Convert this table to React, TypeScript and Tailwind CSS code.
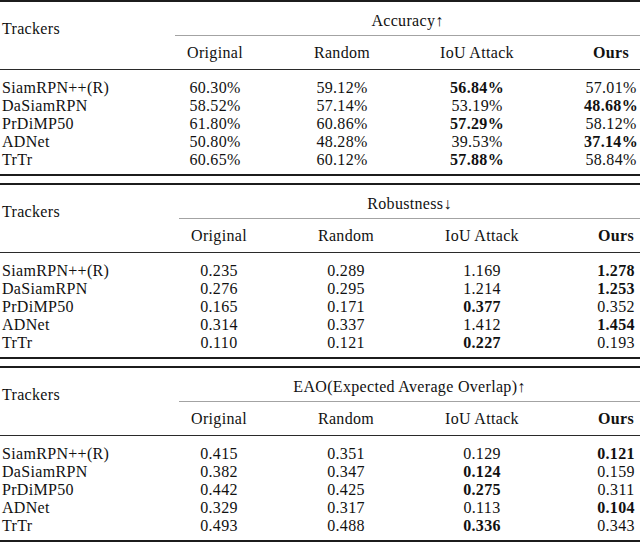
import React from "react";

type Cell = { v: string; b?: boolean };

interface TableData {
  title: string;
  cols: string;
  oursPad: string;
  rows: { name: string; cells: Cell[] }[];
}

const names = ["SiamRPN++(R)", "DaSiamRPN", "PrDiMP50", "ADNet", "TrTr"];

const mk = (vals: string[][], bold: number[][]) =>
  names.map((name, i) => ({
    name,
    cells: vals[i].map((v, j) => ({ v, b: bold[i].includes(j) })),
  }));

const tables: TableData[] = [
  {
    title: "Accuracy↑",
    cols: "grid-cols-[175px_80px_174px_96px_115px]",
    oursPad: "pl-[57px]",
    rows: mk(
      [
        ["60.30%", "59.12%", "56.84%", "57.01%"],
        ["58.52%", "57.14%", "53.19%", "48.68%"],
        ["61.80%", "60.86%", "57.29%", "58.12%"],
        ["50.80%", "48.28%", "39.53%", "37.14%"],
        ["60.65%", "60.12%", "57.88%", "58.84%"],
      ],
      [[2], [3], [2], [3], [2]]
    ),
  },
  {
    title: "Robustness↓",
    cols: "grid-cols-[179px_80px_174px_98px_109px]",
    oursPad: "pl-[61px]",
    rows: mk(
      [
        ["0.235", "0.289", "1.169", "1.278"],
        ["0.276", "0.295", "1.214", "1.253"],
        ["0.165", "0.171", "0.377", "0.352"],
        ["0.314", "0.337", "1.412", "1.454"],
        ["0.110", "0.121", "0.227", "0.193"],
      ],
      [[3], [3], [2], [3], [2]]
    ),
  },
  {
    title: "EAO(Expected Average Overlap)↑",
    cols: "grid-cols-[179px_80px_174px_98px_109px]",
    oursPad: "pl-[61px]",
    rows: mk(
      [
        ["0.415", "0.351", "0.129", "0.121"],
        ["0.382", "0.347", "0.124", "0.159"],
        ["0.442", "0.425", "0.275", "0.311"],
        ["0.329", "0.317", "0.113", "0.104"],
        ["0.493", "0.488", "0.336", "0.343"],
      ],
      [[3], [2], [2], [3], [2]]
    ),
  },
];

const Table = ({ t }: { t: TableData }) => (
  <div className="border-y-2 border-[#1c1c1c]">
    <div className={`grid ${t.cols}`}>
      <div className="row-span-2 pl-[2px] pt-[18px] leading-[18px]">Trackers</div>
      <div className="col-span-4 h-[34px] border-b border-[#a3a3a3] pt-[10px] text-center leading-[18px]">
        {t.title}
      </div>
      <div className="h-[33px] flex items-center justify-center">Original</div>
      <div className="h-[33px] flex items-center justify-center">Random</div>
      <div className="h-[33px] flex items-center justify-center">IoU Attack</div>
      <div className={`h-[33px] flex items-center justify-center font-bold ${t.oursPad}`}>
        Ours
      </div>
    </div>
    <div className="h-px bg-[#2a2a2a]" />
    <div className="pt-[9px] pb-[5px]">
      {t.rows.map((r) => (
        <div key={r.name} className={`grid ${t.cols} h-[18px] leading-[18px]`}>
          <div className="pl-[2px]">{r.name}</div>
          {r.cells.map((c, j) => (
            <div
              key={j}
              className={`text-center ${c.b ? "font-bold" : ""} ${j === 3 ? t.oursPad : ""}`}
            >
              {c.v}
            </div>
          ))}
        </div>
      ))}
    </div>
  </div>
);

export default function App() {
  return (
    <div className="w-[640px] h-[542px] overflow-hidden bg-white text-[#111] text-[16px] tracking-[0.02em] font-['Liberation_Serif',serif]">
      <Table t={tables[0]} />
      <div className="mt-[7px]">
        <Table t={tables[1]} />
      </div>
      <div className="mt-[7px]">
        <Table t={tables[2]} />
      </div>
    </div>
  );
}
